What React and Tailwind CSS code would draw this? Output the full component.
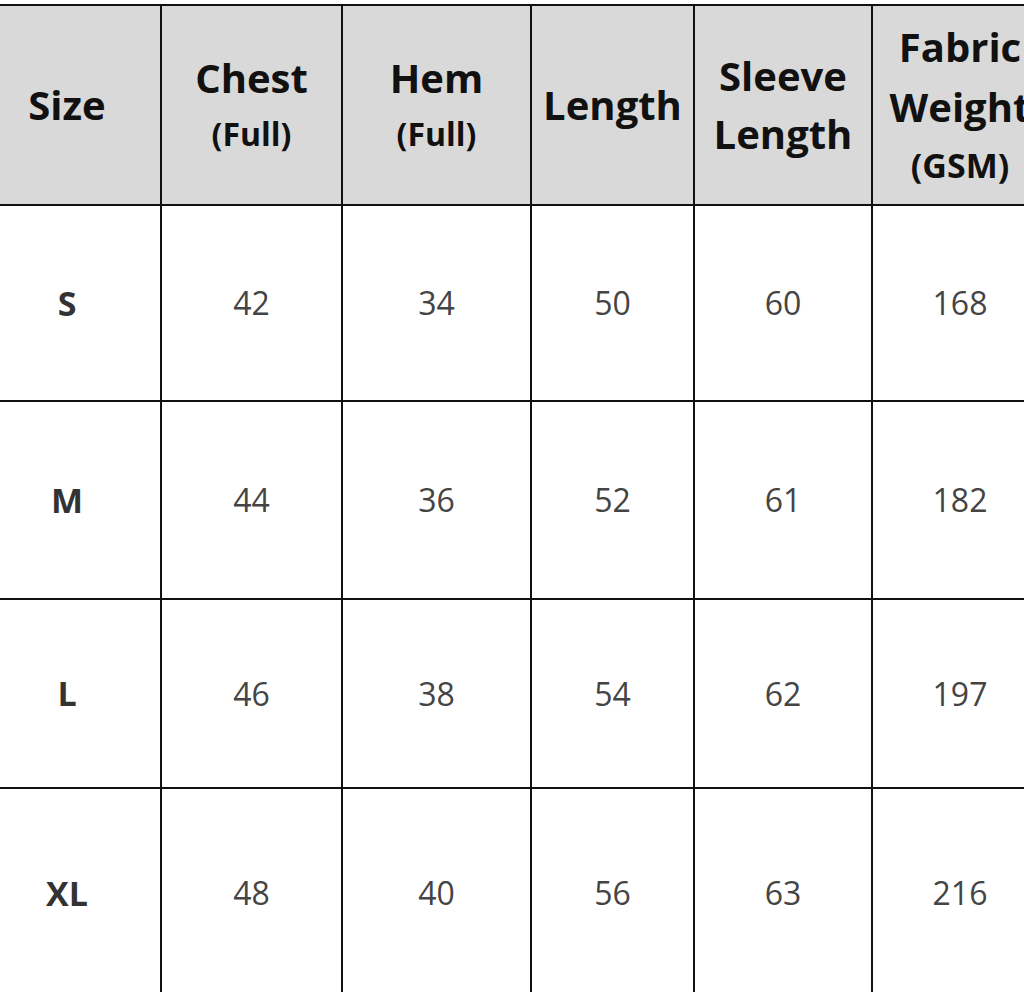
const columns = [
  { w: "w-[188px] -ml-[26px]", head: [["Size", "big"]] },
  { w: "w-[181px]", head: [["Chest", "big"], ["(Full)", "small"]] },
  { w: "w-[189px]", head: [["Hem", "big"], ["(Full)", "small"]] },
  { w: "w-[163px]", head: [["Length", "big"]] },
  { w: "w-[178px]", head: [["Sleeve", "big"], ["Length", "big"]] },
  { w: "w-[176px]", head: [["Fabric", "tall"], ["Weight", "tall"], ["(GSM)", "mid"]] },
];

const rows = [
  { h: "h-[196px]", cells: ["S", "42", "34", "50", "60", "168"] },
  { h: "h-[198px]", cells: ["M", "44", "36", "52", "61", "182"] },
  { h: "h-[189px]", cells: ["L", "46", "38", "54", "62", "197"] },
  { h: "h-[210px]", cells: ["XL", "48", "40", "56", "63", "216"] },
];

const headLine = {
  big: "text-[40px] leading-[58px]",
  tall: "text-[40px] leading-[60px]",
  mid: "text-[34px] leading-[56px]",
  small: "text-[32px] leading-[54px]",
};

export default function App() {
  return (
    <div
      className="w-[1024px] h-[992px] overflow-hidden bg-white pt-[4px]"
      style={{ fontFamily: '"Open Sans", "Noto Sans", sans-serif' }}
    >
      <div className="w-[1080px] border-t-2 border-[#111]">
        {/* Header row */}
        <div className="flex h-[200px] bg-[#d9d9d9] border-b-2 border-[#111]">
          {columns.map((col, i) => (
            <div
              key={i}
              className={`${col.w} shrink-0 border-r-2 border-[#111] flex flex-col items-center justify-center font-bold text-[#111]`}
            >
              {col.head.map(([text, size], j) => (
                <span key={j} className={`${headLine[size]} whitespace-nowrap`}>
                  {text}
                </span>
              ))}
            </div>
          ))}
        </div>

        {/* Body rows */}
        {rows.map((row, r) => (
          <div key={r} className={`flex ${row.h} border-b-2 border-[#111]`}>
            {row.cells.map((cell, i) => (
              <div
                key={i}
                className={`${columns[i].w} shrink-0 border-r-2 border-[#111] flex items-center justify-center`}
              >
                {i === 0 ? (
                  <span className="text-[34px] font-bold text-[#333]">{cell}</span>
                ) : (
                  <span className="text-[32px] text-[#444]">{cell}</span>
                )}
              </div>
            ))}
          </div>
        ))}
      </div>
    </div>
  );
}
